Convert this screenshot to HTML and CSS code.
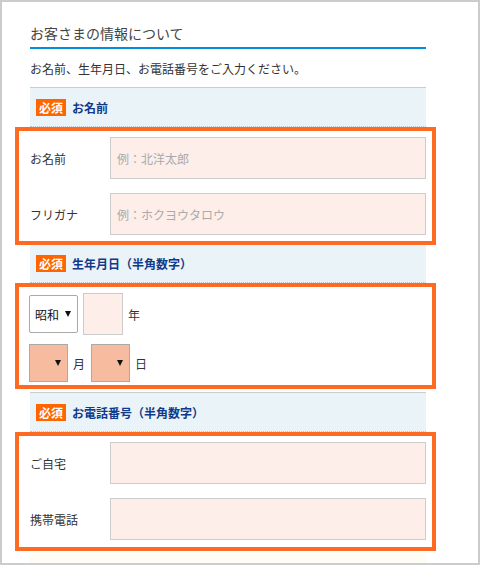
FILE: index.html
```html
<!DOCTYPE html>
<html lang="ja">

<head>
    <meta charset="UTF-8">
    <meta name="viewport" content="width=device-width, initial-scale=1.0">
    <title>お客さまの情報について</title>
    <link rel="stylesheet" href="styles.css">
</head>

<body>
    <div class="frame">
        <div class="form-wrap">
            <h2 class="form-title">お客さまの情報について</h2>
            <p class="form-lead">お名前、生年月日、お電話番号をご入力ください。</p>

            <!-- お名前 -->
            <div class="sec-head"><span class="badge">必須</span>お名前</div>
            <div class="sec-body">
                <div class="row">
                    <label class="row-label">お名前</label>
                    <input class="text-input" type="text" placeholder="例：北洋太郎">
                </div>
                <div class="row">
                    <label class="row-label">フリガナ</label>
                    <input class="text-input" type="text" placeholder="例：ホクヨウタロウ">
                </div>
            </div>

            <!-- 生年月日 -->
            <div class="sec-head sec-head-short"><span class="badge">必須</span>生年月日（半角数字）</div>
            <div class="sec-body sec-body-date">
                <div class="date-row">
                    <div class="select select-era"><span>昭和</span><span class="arrow"></span></div>
                    <input class="year-input" type="text">
                    <span class="unit">年</span>
                </div>
                <div class="date-row date-row-2">
                    <div class="select select-num"><span class="arrow"></span></div>
                    <span class="unit">月</span>
                    <div class="select select-num"><span class="arrow"></span></div>
                    <span class="unit">日</span>
                </div>
            </div>

            <!-- お電話番号 -->
            <div class="sec-head sec-head-gap"><span class="badge">必須</span>お電話番号（半角数字）</div>
            <div class="sec-body sec-body-tel">
                <div class="row">
                    <label class="row-label">ご自宅</label>
                    <input class="text-input" type="text">
                </div>
                <div class="row">
                    <label class="row-label">携帯電話</label>
                    <input class="text-input" type="text">
                </div>
            </div>

            <div class="next-area"></div>
        </div>
    </div>
</body>

</html>
```

FILE: styles.css
```css
html,
body {
    margin: 0;
    padding: 0;
    background-color: #fff;
}

body {
    font-family: "Noto Sans CJK JP", "Noto Sans", sans-serif;
    color: #333;
}

.frame {
    width: 480px;
    height: 565px;
    box-sizing: border-box;
    border: 2px solid #cccccc;
    overflow: hidden;
}

.form-wrap {
    width: 396px;
    margin-left: 28px;
}

.form-title {
    margin: 0;
    padding: 21px 0 4px;
    font-size: 14px;
    font-weight: normal;
    line-height: 20px;
    color: #444;
    border-bottom: 2px solid #0090d9;
}

.form-lead {
    margin: 10px 0 8px;
    font-size: 12px;
    line-height: 20px;
    color: #333;
}

/* 見出し */
.sec-head {
    display: flex;
    align-items: center;
    height: 38px;
    padding-left: 6px;
    background-color: #eaf3f7;
    border-top: 1px solid #cccccc;
    border-bottom: 1px dotted #b9c3c8;
    font-size: 12px;
    font-weight: bold;
    color: #10398a;
}

.sec-head-short {
    height: 37px;
    border-top: none;
}

.sec-head-gap {
    margin-top: 3px;
}

.badge {
    display: inline-block;
    width: 30px;
    height: 17px;
    line-height: 17px;
    margin-right: 6px;
    background-color: #ff6600;
    color: #fff;
    font-size: 12px;
    font-weight: bold;
    text-align: center;
}

/* 入力エリア (オレンジ枠) */
.sec-body {
    margin: 0 -10px 0 -15px;
    border: 4px solid #ff6a22;
    padding: 6px 6px 6px 11px;
    background-color: #fff;
    display: flex;
    flex-direction: column;
    gap: 14px;
}

.sec-body-tel {
    padding-bottom: 7px;
}

.row {
    display: flex;
    align-items: center;
}

.row-label {
    width: 80px;
    font-size: 12px;
    color: #333;
}

.text-input {
    flex: 1;
    height: 42px;
    box-sizing: border-box;
    margin: 0;
    padding: 0 6px;
    border: 1px solid #cccccc;
    background-color: #fdeee9;
    font-family: inherit;
    font-size: 12px;
    color: #333;
}

.text-input::placeholder {
    color: #aaaaaa;
}

/* 生年月日 */
.sec-body-date {
    padding: 6px 6px 3px 10px;
    gap: 9px;
}

.date-row {
    display: flex;
    align-items: center;
    gap: 5px;
    height: 42px;
}

.date-row-2 {
    height: 38px;
}

.select {
    display: flex;
    align-items: center;
    justify-content: space-between;
    height: 38px;
    box-sizing: border-box;
    padding: 0 6px 0 5px;
    border: 1px solid #aaaaaa;
    font-size: 12px;
    color: #111;
}

.select-era {
    width: 49px;
    background-color: #fff;
    border-radius: 2px;
}

.select-num {
    width: 39px;
    justify-content: flex-end;
    background-color: #f7bb9f;
}

.arrow {
    width: 0;
    height: 0;
    border-left: 3.5px solid transparent;
    border-right: 3.5px solid transparent;
    border-top: 6px solid #111;
}

.year-input {
    width: 40px;
    height: 42px;
    box-sizing: border-box;
    margin: 0;
    border: 1px solid #cccccc;
    background-color: #fdeee9;
}

.unit {
    font-size: 12px;
    color: #333;
}

.date-row-2 .unit {
    margin-right: 1px;
}

.next-area {
    margin-top: 2px;
    height: 12px;
    background-color: #fffcf6;
}
```
